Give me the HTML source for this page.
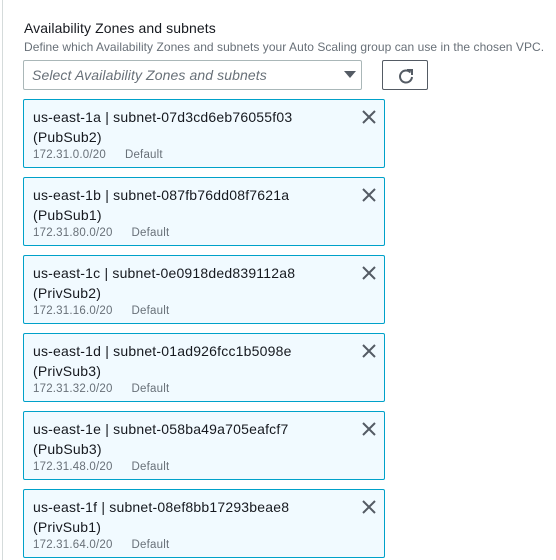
<!DOCTYPE html>
<html><head><style>
body{margin:0;width:556px;height:560px;background:#fff;font-family:"Liberation Sans",sans-serif;position:relative;overflow:hidden}
.vl{position:absolute;left:2px;top:0;width:1px;height:560px;background:#d5dbdb}
.t{position:absolute;left:24px;top:20px;font-size:14px;color:#16191f;letter-spacing:0.1px}
.d{position:absolute;left:24px;top:40px;font-size:12px;color:#687078;white-space:nowrap;letter-spacing:0.05px}
.sel{position:absolute;left:23px;top:60px;width:339px;height:30px;border:1px solid #aab7b8;border-radius:2px;box-sizing:border-box}
.sel span{position:absolute;left:8px;top:6px;font-size:14px;font-style:italic;color:#687078;letter-spacing:0.1px}
.tri{position:absolute;left:320px;top:10px;width:0;height:0;border-left:6px solid transparent;border-right:6px solid transparent;border-top:7px solid #545b64}
.rb{position:absolute;left:382px;top:60px;width:46px;height:30px;border:1px solid #545b64;border-radius:2px;box-sizing:border-box}
.card{position:absolute;left:23px;width:362px;height:69px;border:1px solid #00a1c9;background:#f1faff;border-radius:2px;box-sizing:border-box}
.l1{position:absolute;left:9px;top:9px;font-size:14px;color:#16191f;white-space:nowrap;letter-spacing:0.2px}
.l2{position:absolute;left:9px;top:29px;font-size:14px;color:#16191f;letter-spacing:0.2px}
.l3{position:absolute;left:9px;top:49px;font-size:11.5px;color:#687078;white-space:nowrap;letter-spacing:0.2px}
.l3 b{font-weight:normal;margin-left:19px}
.x{position:absolute;left:337px;top:9px}
</style></head><body>
<div class="vl"></div>
<div class="t">Availability Zones and subnets</div>
<div class="d">Define which Availability Zones and subnets your Auto Scaling group can use in the chosen VPC.</div>
<div class="sel"><span>Select Availability Zones and subnets</span><div class="tri"></div></div>
<div class="rb"><svg width="46" height="30" viewBox="0 0 46 30"><path d="M27.5 11.5 A6 6 0 1 0 29 16" fill="none" stroke="#545b64" stroke-width="2"/><path d="M24 9 L29 9 L29 14" fill="none" stroke="#545b64" stroke-width="2"/></svg></div>

<div class="card" style="top:99px"><div class="l1">us-east-1a | subnet-07d3cd6eb76055f03</div><div class="l2">(PubSub2)</div><div class="l3">172.31.0.0/20<b>Default</b></div><svg class="x" width="16" height="16"><path d="M2 2L14 14M14 2L2 14" stroke="#545b64" stroke-width="2"/></svg></div>
<div class="card" style="top:177px"><div class="l1">us-east-1b | subnet-087fb76dd08f7621a</div><div class="l2">(PubSub1)</div><div class="l3">172.31.80.0/20<b>Default</b></div><svg class="x" width="16" height="16"><path d="M2 2L14 14M14 2L2 14" stroke="#545b64" stroke-width="2"/></svg></div>
<div class="card" style="top:255px"><div class="l1">us-east-1c | subnet-0e0918ded839112a8</div><div class="l2">(PrivSub2)</div><div class="l3">172.31.16.0/20<b>Default</b></div><svg class="x" width="16" height="16"><path d="M2 2L14 14M14 2L2 14" stroke="#545b64" stroke-width="2"/></svg></div>
<div class="card" style="top:333px"><div class="l1">us-east-1d | subnet-01ad926fcc1b5098e</div><div class="l2">(PrivSub3)</div><div class="l3">172.31.32.0/20<b>Default</b></div><svg class="x" width="16" height="16"><path d="M2 2L14 14M14 2L2 14" stroke="#545b64" stroke-width="2"/></svg></div>
<div class="card" style="top:411px"><div class="l1">us-east-1e | subnet-058ba49a705eafcf7</div><div class="l2">(PubSub3)</div><div class="l3">172.31.48.0/20<b>Default</b></div><svg class="x" width="16" height="16"><path d="M2 2L14 14M14 2L2 14" stroke="#545b64" stroke-width="2"/></svg></div>
<div class="card" style="top:489px"><div class="l1">us-east-1f | subnet-08ef8bb17293beae8</div><div class="l2">(PrivSub1)</div><div class="l3">172.31.64.0/20<b>Default</b></div><svg class="x" width="16" height="16"><path d="M2 2L14 14M14 2L2 14" stroke="#545b64" stroke-width="2"/></svg></div>
</body></html>
